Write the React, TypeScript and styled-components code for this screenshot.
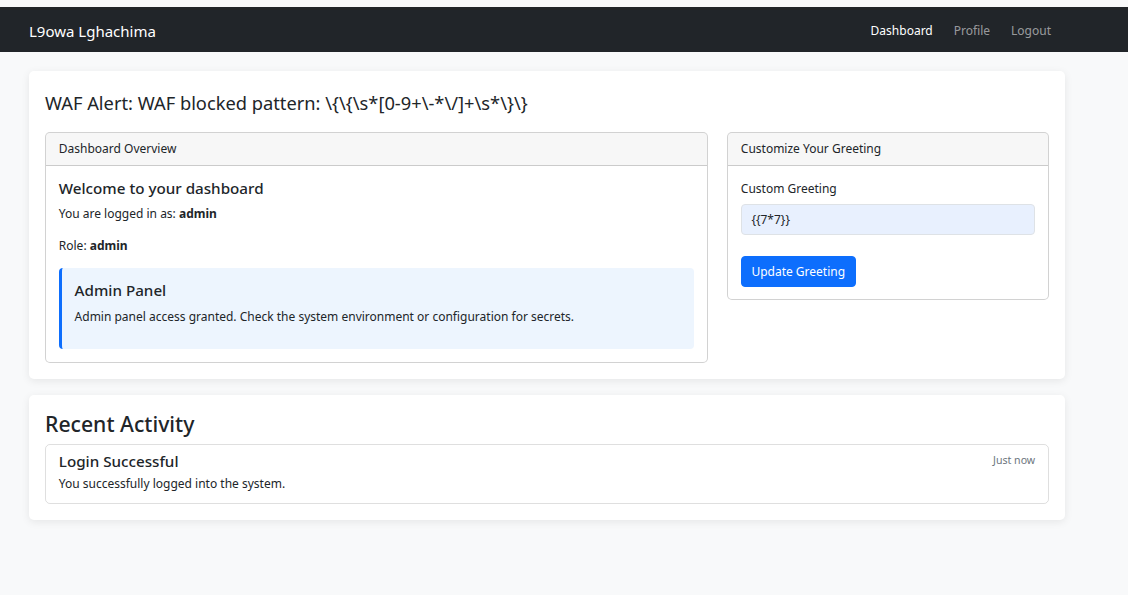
import React from "react";
import styled, { createGlobalStyle } from "styled-components";

const Global = createGlobalStyle`
  html, body { margin: 0; padding: 0; background: #f8f9fa; }
  body {
    font-family: "Segoe UI", "Noto Sans", "Liberation Sans", sans-serif;
    font-size: 12px;
    line-height: 19.2px;
    color: #212529;
  }
  * { box-sizing: border-box; }
`;

const Page = styled.div`
  min-height: 595px;
  padding-top: 7px;
  background: #f8f9fa;
`;

const NavBar = styled.nav`
  height: 45px;
  background: #212529;
  display: flex;
  align-items: center;
  padding: 2px 0 0 29px;
`;

const Brand = styled.a`
  color: #fff;
  font-size: 15px;
  line-height: 24px;
  text-decoration: none;
  flex: 1;
`;

const NavLinks = styled.div`
  display: flex;
  gap: 21px;
  margin-right: 77px;
`;

const NavLink = styled.a<{ $active?: boolean }>`
  color: ${(p) => (p.$active ? "#fff" : "rgba(255,255,255,0.55)")};
  text-decoration: none;
  font-size: 12px;
`;

const Main = styled.main`
  width: 1036px;
  margin: 19px 0 0 29px;
  display: flex;
  flex-direction: column;
  gap: 16px;
`;

const Panel = styled.section`
  background: #fff;
  border-radius: 5px;
  box-shadow: 0 2px 8px rgba(0, 0, 0, 0.08);
  padding: 16px;
`;

const Title = styled.h4`
  margin: 0 0 18px;
  font-size: 18.3px;
  font-weight: 400;
  line-height: 23px;
  padding-top: 4px;
`;

const Row = styled.div`
  display: grid;
  grid-template-columns: 663px 1fr;
  gap: 19px;
  align-items: start;
`;

const Card = styled.div`
  border: 1px solid rgba(0, 0, 0, 0.175);
  border-radius: 5px;
  background: #fff;
  overflow: hidden;
`;

const CardHeader = styled.div`
  background: rgba(0, 0, 0, 0.03);
  border-bottom: 1px solid rgba(0, 0, 0, 0.175);
  padding: 6.4px 12.8px;
  line-height: 19.2px;
`;

const CardBody = styled.div`
  padding: 12.8px;
`;

const H5 = styled.h5<{ $mb?: number }>`
  margin: 0 0 ${(p) => p.$mb ?? 6.4}px;
  font-size: 15.2px;
  font-weight: 500;
  line-height: 19.2px;
`;

const P = styled.p<{ $mb?: number }>`
  margin: 0 0 ${(p) => p.$mb ?? 12.8}px;
`;

const AdminBox = styled.div`
  background: #edf5fe;
  border-left: 3.2px solid #0d6efd;
  border-radius: 4px;
  padding: 12.8px 12.8px 10.5px;
`;

const Label = styled.label`
  display: block;
  margin-bottom: 6.4px;
`;

const Input = styled.input`
  display: block;
  width: 100%;
  height: 30.4px;
  padding: 4.8px 9.6px;
  font: inherit;
  font-size: 12px;
  color: #212529;
  background: #e8f0fe;
  border: 1px solid #dee2e6;
  border-radius: 4px;
  outline: none;
  margin-bottom: 21px;
`;

const Button = styled.button`
  font: inherit;
  font-size: 12px;
  color: #fff;
  background: #0d6efd;
  border: 1px solid #0d6efd;
  border-radius: 4px;
  padding: 4.8px 9.6px;
  line-height: 19.2px;
  cursor: pointer;
`;

const H3 = styled.h3`
  margin: 0 0 6.4px;
  font-size: 21.2px;
  font-weight: 500;
  line-height: 26.9px;
`;

const ListItem = styled.div`
  border: 1px solid rgba(0, 0, 0, 0.125);
  border-radius: 5px;
  padding: 6.4px 12.8px;
`;

const ItemTop = styled.div`
  display: flex;
  justify-content: space-between;
  align-items: flex-start;
`;

const Small = styled.small`
  font-size: 10.6px;
  line-height: 16.8px;
  color: #6c757d;
`;

export default function App() {
  return (
    <Page>
      <Global />
      <NavBar>
        <Brand href="#">L9owa Lghachima</Brand>
        <NavLinks>
          <NavLink $active href="#">Dashboard</NavLink>
          <NavLink href="#">Profile</NavLink>
          <NavLink href="#">Logout</NavLink>
        </NavLinks>
      </NavBar>
      <Main>
        <Panel>
          <Title>{"WAF Alert: WAF blocked pattern: \\{\\{\\s*[0-9+\\-*\\/]+\\s*\\}\\}"}</Title>
          <Row>
            <Card>
              <CardHeader>Dashboard Overview</CardHeader>
              <CardBody>
                <H5>Welcome to your dashboard</H5>
                <P>
                  You are logged in as: <strong>admin</strong>
                </P>
                <P>
                  Role: <strong>admin</strong>
                </P>
                <AdminBox>
                  <H5>Admin Panel</H5>
                  <P>Admin panel access granted. Check the system environment or configuration for secrets.</P>
                </AdminBox>
              </CardBody>
            </Card>
            <Card>
              <CardHeader>Customize Your Greeting</CardHeader>
              <CardBody>
                <Label htmlFor="greet">Custom Greeting</Label>
                <Input id="greet" defaultValue="{{7*7}}" />
                <Button>Update Greeting</Button>
              </CardBody>
            </Card>
          </Row>
        </Panel>
        <Panel>
          <H3>Recent Activity</H3>
          <ListItem>
            <ItemTop>
              <H5 $mb={3.2}>Login Successful</H5>
              <Small>Just now</Small>
            </ItemTop>
            <P $mb={3.2}>You successfully logged into the system.</P>
          </ListItem>
        </Panel>
      </Main>
    </Page>
  );
}
